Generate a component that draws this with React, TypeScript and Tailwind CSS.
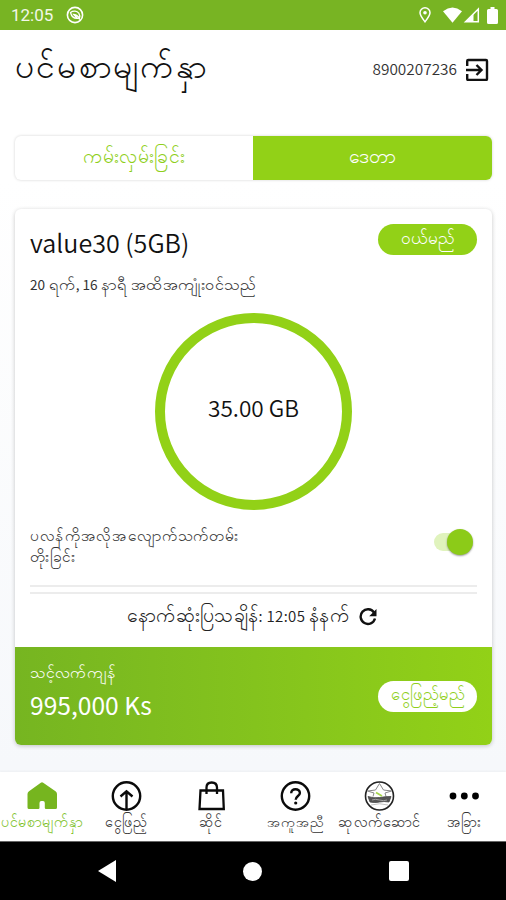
import type { ReactNode } from 'react'

type NavItem = {
  label: string
  icon: ReactNode
  textClass: string
}

const NAV_ITEMS: NavItem[] = [
  { label: 'ပင်မစာမျက်နှာ', icon: <HomeIcon />, textClass: 'text-[14.3px] text-[#7cc11f]' },
  { label: 'ငွေဖြည့်', icon: <TopUpIcon />, textClass: 'text-[14.5px] text-[#333]' },
  { label: 'ဆိုင်', icon: <BagIcon />, textClass: 'text-[14.5px] text-[#333]' },
  { label: 'အကူအညီ', icon: <HelpIcon />, textClass: 'text-[14.2px] text-[#333]' },
  { label: 'ဆုလက်ဆောင်', icon: <RewardIcon />, textClass: 'text-[14.6px] tracking-[0.2px] text-[#333]' },
  { label: 'အခြား', icon: <MoreIcon />, textClass: 'text-[14.5px] text-[#333]' },
]

function HomeIcon() {
  return (
    <svg width="32" height="32" viewBox="0 0 32 32" fill="#76b51f">
      <path d="M14.800 2.700Q16 1.800 17.200 2.700L29.500 11.300Q31 12.300 31 14V27.500Q31 29 29.500 29H20Q18.800 29 18.800 27.800V23Q18.800 21 17 21H15.300Q13.500 21 13.500 23V27.800Q13.500 29 12.300 29H3Q1.500 29 1.500 27.500V14Q1.500 12.300 3 11.300Z" />
    </svg>
  )
}

function TopUpIcon() {
  return (
    <svg width="32" height="32" viewBox="0 0 32 32" fill="none" stroke="#0a0a0a" strokeWidth="2.4">
      <circle cx="16.500" cy="16" r="13.700" />
      <path d="M16.500 29V11.500M10.500 16.500 16.500 11.300 22.500 16.500" />
    </svg>
  )
}

function BagIcon() {
  return (
    <svg width="32" height="32" viewBox="0 0 32 32" fill="none" stroke="#0a0a0a" strokeWidth="2.3">
      <path d="M5.500 10.500H28L28.800 29H4.500Z" />
      <path d="M11.500 14V7.500Q11.500 2.500 16.700 2.500T22 7.500V14" />
    </svg>
  )
}

function HelpIcon() {
  return (
    <svg width="32" height="32" viewBox="0 0 32 32" fill="none" stroke="#0a0a0a" strokeWidth="2.4">
      <circle cx="16.500" cy="16" r="13.700" />
      <path d="M12.200 13.200C12.200 10.500 14.100 9.200 16.500 9.200S20.900 10.700 20.900 12.900C20.900 15.900 16.700 16.200 16.700 19.700" />
      <circle cx="16.700" cy="23" r="1.600" fill="#0a0a0a" stroke="none" />
    </svg>
  )
}

function RewardIcon() {
  return (
    <svg width="32" height="32" viewBox="0 0 32 32" fill="none">
      <circle cx="16.500" cy="16" r="14" stroke="#222" strokeWidth="1.6" />
      <path d="M10 16.500 11 13 4.500 11 12.500 10 16.500 3.500 20.500 10 28.500 11 22 13 23 16.500" stroke="#888" strokeWidth="1" />
      <path d="M7 22 5 16.500Q11 18.500 16.500 17.500T28 16.500L26 22Q21 21 16.500 22T7 22Z" fill="#555" stroke="#444" strokeWidth="0.8" />
      <path d="M9 20Q12 18.600 16.500 20T24 20" stroke="#aaa" strokeWidth="0.9" />
      <path d="M8 25Q16.500 22.500 25 25" stroke="#bbb" strokeWidth="0.9" />
      <path d="M13 12.500 19 16" stroke="#a5d64c" strokeWidth="1.8" />
    </svg>
  )
}

function MoreIcon() {
  return (
    <svg width="32" height="32" viewBox="0 0 32 32" fill="#000">
      <circle cx="5" cy="16" r="3.400" />
      <circle cx="16.300" cy="16" r="3.400" />
      <circle cx="27.500" cy="16" r="3.400" />
    </svg>
  )
}

function StatusBar() {
  return (
    <div className="flex h-[30px] shrink-0 items-center bg-[#78b423] pl-[11px] pr-2 text-white">
      <span className="font-[Roboto] text-[17px] leading-[32px] text-white/90">12:05</span>
      <svg className="ml-[13px]" width="18" height="18" viewBox="0 0 18 18" fill="none" stroke="#fff">
        <circle cx="9" cy="9" r="7.600" strokeWidth="1.6" />
        <path d="M4.500 6.500C7.500 4.300 11 5 12.800 7.200 14 9 14 11 13.300 12.800C12.500 10.500 10.500 8.800 7.800 8.500L11.300 12.300C8 12.500 5.500 10.500 4.500 6.500Z" strokeWidth="1.3" />
      </svg>
      <svg className="ml-auto" width="12" height="16" viewBox="0 0 12 16" fill="none" stroke="#fff">
        <path d="M6 14.800C3.500 11.500 1 8.500 1 5.800A5 5 0 0 1 11 5.800C11 8.500 8.500 11.500 6 14.800Z" strokeWidth="1.5" />
        <circle cx="6" cy="5.800" r="1.800" fill="#fff" stroke="none" />
      </svg>
      <svg className="ml-[12px]" width="19" height="16" viewBox="0 0 19 16" fill="#fff">
        <path d="M0 4.200Q9.500-3.200 19 4.200L9.500 15.800Z" />
      </svg>
      <svg className="ml-px" width="17" height="16" viewBox="0 0 17 16">
        <path d="M2.500 14.800 15.300 2V14.800Z" fill="none" stroke="#fff" strokeWidth="1.5" />
        <path d="M2 15 10.500 7V15Z" fill="#fff" />
      </svg>
      <svg className="ml-[7px]" width="11" height="17" viewBox="0 0 11 17" fill="#fff">
        <path d="M3.500 0H7.500V2H9.500Q11 2 11 3.500V15.500Q11 17 9.500 17H1.500Q0 17 0 15.500V3.500Q0 2 1.500 2H3.500Z" />
      </svg>
    </div>
  )
}

function Header() {
  return (
    <header className="flex h-[106px] shrink-0 items-start justify-between pl-[15px] pr-[17px]">
      <h1 className="mt-[10px] whitespace-nowrap text-[33.6px] leading-[48px] tracking-[2.1px]">ပင်မစာမျက်နှာ</h1>
      <div className="mt-[27px] flex items-center gap-[8px]">
        <span className="-mt-[3px] text-[15.4px] font-[350] leading-[24px] text-[#333]">8900207236</span>
        <svg width="24" height="24" viewBox="0 0 24 24" fill="none" stroke="#111" strokeWidth="2.4">
          <path d="M2.200 9V4Q2.200 3 3.200 3H21Q22 3 22 4V22Q22 23 21 23H3.200Q2.200 23 2.200 22V17" />
          <path d="M1 13H16M11.500 8 16.500 13 11.500 18" />
        </svg>
      </div>
    </header>
  )
}

function Tabs() {
  return (
    <div className="ml-[15px] mr-[14px] flex h-11 shrink-0 overflow-hidden rounded-md bg-white text-[19.4px] leading-[38px] tracking-[0.5px] shadow-[0_0_3px_rgba(0,0,0,0.18)]">
      <div className="w-[238px] text-center text-[#8fcf1b]">ကမ်းလှမ်းခြင်း</div>
      <div className="flex-1 bg-[#92d117] text-center text-white">ဒေတာ</div>
    </div>
  )
}

function PlanCard() {
  return (
    <section className="ml-[15px] mr-[14px] mt-[29px] flex h-[536px] shrink-0 flex-col overflow-hidden rounded-md bg-white shadow-[0_1px_4px_rgba(0,0,0,0.22)]">
      <div className="flex h-[438px] flex-col px-[15px]">
        <div className="flex items-start justify-between pt-[15px]">
          <h2 className="mt-[1px] text-[25.1px] font-[350] leading-[34px] text-[#111]">value30 (5GB)</h2>
          <button className="flex h-[31px] w-[99px] justify-center rounded-full bg-[#92d117] text-[17.2px] leading-[26px] text-white">
            ဝယ်မည်
          </button>
        </div>
        <p className="mt-[12px] h-6 whitespace-nowrap text-[16.3px] leading-[24px] text-[#333]">
          <span className="text-[13.6px]">20</span> ရက်<span className="text-[13.6px]">, 16</span> နာရီ အထိအကျုံးဝင်သည်
        </p>
        <div className="mt-[18px] flex size-[197px] shrink-0 items-center justify-center self-center rounded-full border-[10px] border-[#92d117] text-[22.6px] font-[350] leading-[32px] text-[#111]">
          <span className="mb-[8px]">35.00 GB</span>
        </div>
        <div className="mt-[14px] flex h-[42px] justify-between">
          <p className="whitespace-nowrap text-[15.6px] leading-[21px] tracking-[0.65px] text-[#333]">
            ပလန်ကိုအလိုအလျောက်သက်တမ်း
            <br />
            တိုးခြင်း
          </p>
          <div className="mr-[4px] mt-[5px] flex h-[26px] w-[39px] items-center justify-end">
            <div className="h-[18px] w-[26px] rounded-l-full bg-[#e0f3bd]" />
            <div className="-ml-[13px] size-[26px] rounded-full bg-[#8ccb18] shadow-[0_1px_2px_rgba(0,0,0,0.4)]" />
          </div>
        </div>
        <div className="mt-[19px] h-[9px] shrink-0 border-y-2 border-[#ececec]" />
        <div className="mt-[7px] flex items-center justify-center gap-[10px] pr-[3px] text-[19.4px] leading-[26px] text-[#222]">
          <span className="whitespace-nowrap tracking-[0.35px]">
            နောက်ဆုံးပြသချိန်<span className="text-[15px] font-[350]">: 12:05 </span>နံနက်
          </span>
          <svg className="mt-[3px]" width="18" height="18" viewBox="0 0 18 18">
            <path d="M15 4.500A7.300 7.300 0 1 0 16 10.500" fill="none" stroke="#111" strokeWidth="2.4" />
            <path d="M17.500 1V8.300H10.200Z" fill="#111" />
          </svg>
        </div>
      </div>
      <div className="flex flex-1 items-center justify-between bg-linear-to-r from-[#76b521] to-[#92d117] px-[15px] text-white">
        <div className="-mt-[12px]">
          <p className="whitespace-nowrap text-[16px] leading-[26px]">သင့်လက်ကျန်</p>
          <p className="mt-[2px] text-[24.6px] leading-[36px]">995,000 Ks</p>
        </div>
        <button className="flex h-[31px] w-[99px] justify-center whitespace-nowrap rounded-full bg-white text-[16.6px] leading-[25px] text-[#8fcf1b]">
          ငွေဖြည့်မည်
        </button>
      </div>
    </section>
  )
}

function BottomNav() {
  return (
    <nav className="mt-[27px] grid h-[69px] shrink-0 grid-cols-6 bg-white shadow-[0_-1px_2px_rgba(0,0,0,0.04)]">
      {NAV_ITEMS.map((item) => (
        <div key={item.label} className="flex flex-col items-center pt-[8px]">
          {item.icon}
          <span className={`-mt-px whitespace-nowrap leading-[20px] ${item.textClass}`}>{item.label}</span>
        </div>
      ))}
    </nav>
  )
}

function SystemBar() {
  return (
    <div className="flex flex-1 items-center justify-center gap-[127px] border-t border-[#666] bg-black pl-px">
      <svg width="18" height="22" viewBox="0 0 18 22" fill="#fff">
        <path d="M18 0V22L0 11Z" />
      </svg>
      <div className="size-[19px] rounded-full bg-white" />
      <div className="size-5 rounded-xs bg-white" />
    </div>
  )
}

export default function App() {
  return (
    <main className="flex h-[900px] w-[506px] flex-col overflow-hidden bg-linear-to-b from-white from-20% to-[#f6f8fb] to-85% font-['Noto_Sans_CJK_SC',sans-serif] text-[#111]">
      <StatusBar />
      <Header />
      <Tabs />
      <PlanCard />
      <BottomNav />
      <SystemBar />
    </main>
  )
}
